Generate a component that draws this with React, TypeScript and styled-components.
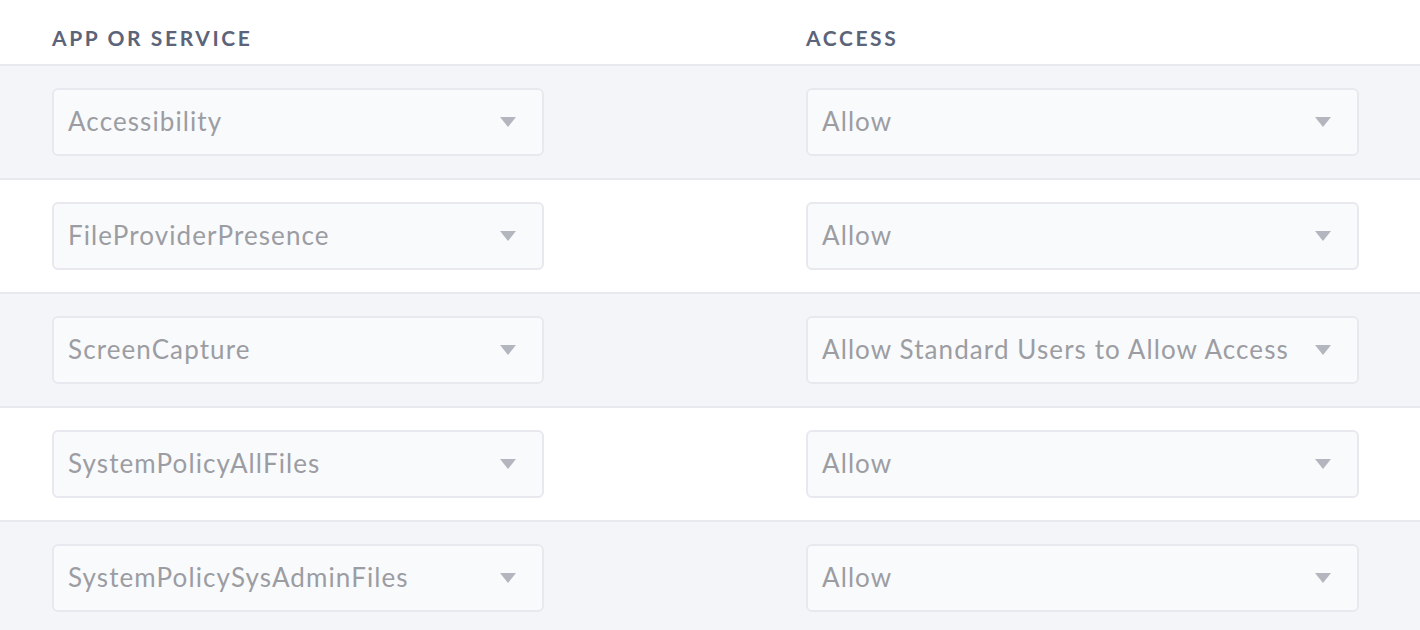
import styled, { createGlobalStyle } from "styled-components";

const GlobalStyle = createGlobalStyle`
  html, body {
    margin: 0;
    padding: 0;
    background: #ffffff;
    font-family: "Lato", "Liberation Sans", sans-serif;
  }
`;

interface Rule {
  service: string;
  access: string;
}

const rules: Rule[] = [
  { service: "Accessibility", access: "Allow" },
  { service: "FileProviderPresence", access: "Allow" },
  { service: "ScreenCapture", access: "Allow Standard Users to Allow Access" },
  { service: "SystemPolicyAllFiles", access: "Allow" },
  { service: "SystemPolicySysAdminFiles", access: "Allow" },
];

const Caret = () => (
  <CaretSvg width="16" height="10" viewBox="0 0 16 10">
    <path d="M0 0 L16 0 L8 10 Z" fill="#b4b6bf" />
  </CaretSvg>
);

const Select = ({ value, $wide }: { value: string; $wide?: boolean }) => (
  <SelectBox $wide={$wide}>
    <SelectValue>{value}</SelectValue>
    <Caret />
  </SelectBox>
);

export default function App() {
  return (
    <>
      <GlobalStyle />
      <Table>
        <HeaderRow>
          <HeaderCell>App or Service</HeaderCell>
          <HeaderCell>Access</HeaderCell>
        </HeaderRow>
        {rules.map((rule, i) => (
          <Row key={rule.service} $striped={i % 2 === 0}>
            <Cell>
              <Select value={rule.service} />
            </Cell>
            <Cell>
              <Select value={rule.access} $wide />
            </Cell>
          </Row>
        ))}
      </Table>
    </>
  );
}

const Table = styled.div`
  width: 1420px;
  display: flex;
  flex-direction: column;
`;

const HeaderRow = styled.div`
  display: grid;
  grid-template-columns: 754px 1fr;
  height: 64px;
  box-sizing: border-box;
  align-items: center;
  padding: 10px 61px 0 52px;
`;

const HeaderCell = styled.div`
  font-family: "Lato", "Liberation Sans", sans-serif;
  font-size: 21px;
  font-weight: 700;
  letter-spacing: 2.6px;
  text-transform: uppercase;
  color: #5b6479;
`;

const Row = styled.div<{ $striped: boolean }>`
  display: grid;
  grid-template-columns: 754px 1fr;
  height: 114px;
  box-sizing: border-box;
  padding: 22px 61px 22px 52px;
  border-top: 2px solid #e8e9ee;
  background: ${(p) => (p.$striped ? "#f4f5f9" : "#ffffff")};
`;

const Cell = styled.div`
  display: flex;
  align-items: center;
`;

const SelectBox = styled.div<{ $wide?: boolean }>`
  box-sizing: border-box;
  width: ${(p) => (p.$wide ? "100%" : "492px")};
  height: 68px;
  display: flex;
  align-items: center;
  justify-content: space-between;
  padding: 0 26px 0 14px;
  background: #f9fafc;
  border: 2px solid #e8e9ee;
  border-radius: 6px;
`;

const SelectValue = styled.span`
  font-family: "Lato", "Liberation Sans", sans-serif;
  font-size: 26px;
  letter-spacing: 1.1px;
  color: #9c9da2;
  white-space: nowrap;
  padding-bottom: 2px;
`;

const CaretSvg = styled.svg`
  flex-shrink: 0;
  display: block;
`;
